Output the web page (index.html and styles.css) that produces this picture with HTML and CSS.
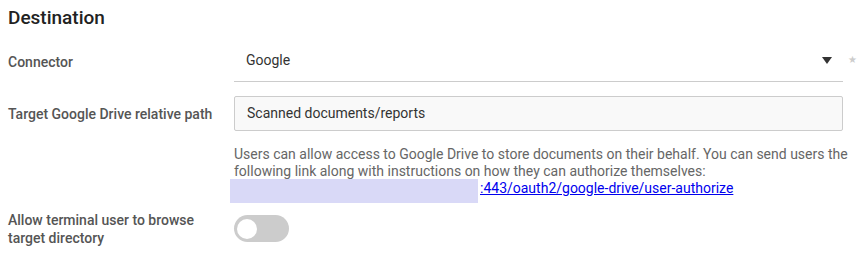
FILE: index.html
```html
<!DOCTYPE html>
<html lang="en">
<head>
  <meta charset="UTF-8" />
  <title>Destination</title>
  <link rel="stylesheet" href="styles.css">
</head>
<body>

  <h2 class="section-title">Destination</h2>

  <!-- Connector -->
  <div class="form-row row-connector">
    <label class="field-label">Connector</label>
    <div class="field">
      <div class="select-wrap">
        <div class="select-box">
          <span class="select-value">Google</span>
          <svg class="select-arrow" width="10" height="7" viewBox="0 0 10 7"><polygon points="0,0 10,0 5,7" fill="#333"/></svg>
        </div>
        <span class="req-star">&#9733;</span>
      </div>
    </div>
  </div>

  <!-- Target path -->
  <div class="form-row row-path">
    <label class="field-label">Target Google Drive relative path</label>
    <div class="field">
      <div class="text-input">Scanned documents/reports</div>
      <p class="help-text">
        Users can allow access to Google Drive to store documents on their behalf. You can send users the following link along with instructions on how they can authorize themselves:<br>
        <span class="redacted"></span><a href="#">:443/oauth2/google-drive/user-authorize</a>
      </p>
    </div>
  </div>

  <!-- Browse toggle -->
  <div class="form-row row-toggle">
    <label class="field-label">Allow terminal user to browse target directory</label>
    <div class="field">
      <div class="toggle"><span class="toggle-knob"></span></div>
    </div>
  </div>

</body>
</html>
```

FILE: styles.css
```css
body {
  margin: 0;
  padding: 0 8px;
  font-family: Roboto, 'Liberation Sans', sans-serif;
  background: #fff;
  color: #555;
}

.section-title {
  font-size: 19px;
  font-weight: 500;
  line-height: 24px;
  color: #222;
  margin: 6px 0 15px;
}

.form-row {
  display: grid;
  grid-template-columns: 226px 1fr;
}

.field-label {
  font-size: 14px;
  font-weight: 500;
  line-height: 18px;
  color: #555;
}

/* connector select */
.row-connector .field-label {
  padding-top: 8px;
}

.select-wrap {
  display: flex;
  align-items: flex-start;
}

.select-box {
  width: 609px;
  height: 37px;
  box-sizing: border-box;
  border-bottom: 1px solid #ccc;
  display: flex;
  align-items: center;
  padding: 0 12px 6px;
}

.select-value {
  flex: 1;
  font-size: 14px;
  color: #333;
}

.select-arrow {
  margin-right: -1px;
}

.req-star {
  font-size: 10px;
  color: #ccc;
  margin: 9px 0 0 5px;
}

/* path input */
.row-path {
  margin-top: 14px;
}

.row-path .field-label {
  padding-top: 9px;
}

.text-input {
  width: 609px;
  height: 35px;
  box-sizing: border-box;
  border: 1px solid #ccc;
  border-radius: 2px;
  background: #f9f9f9;
  padding: 0 12px;
  font-size: 14px;
  line-height: 33px;
  color: #333;
}

.help-text {
  margin: 15px -10px 0 0;
  font-size: 14px;
  line-height: 17px;
  color: #666;
}

.help-text a {
  color: #00e;
}

.redacted {
  display: inline-block;
  width: 248px;
  height: 24px;
  margin: -4px 2px -4px -4px;
  vertical-align: -6px;
  background: #d9d9f7;
}

/* toggle */
.row-toggle {
  margin-top: 12px;
}

.row-toggle .field-label {
  padding-right: 20px;
}

.toggle {
  width: 55px;
  height: 27px;
  margin-top: 4px;
  border-radius: 14px;
  background: #ccc;
  display: flex;
  align-items: center;
  padding-left: 3px;
  box-sizing: border-box;
}

.toggle-knob {
  width: 20px;
  height: 20px;
  border-radius: 50%;
  background: #fff;
}
```
